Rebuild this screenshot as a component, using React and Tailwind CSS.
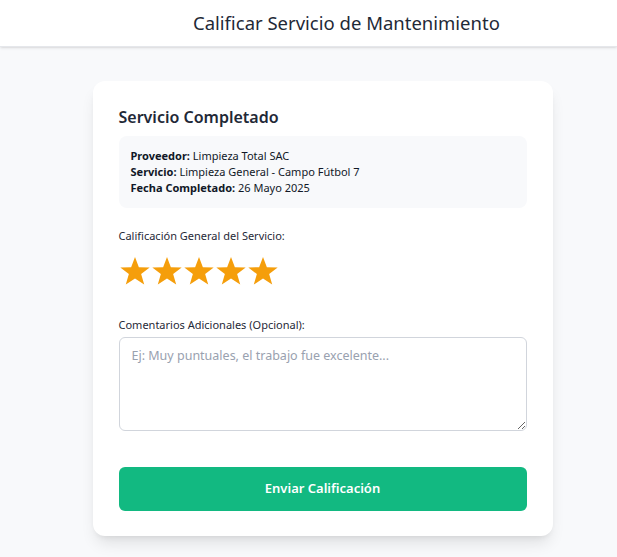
import React, { useState } from "react";

const Star = ({ filled }) => (
  <svg viewBox="0 0 24 24" className="h-[32px] w-[32px]">
    <polygon
      points="12,1.5 14.9,9.1 23,9.3 16.6,14.3 18.9,22.2 12,17.6 5.1,22.2 7.4,14.3 1,9.3 9.1,9.1"
      fill={filled ? "#f59e0b" : "#d1d5db"}
    />
  </svg>
);

const App = () => {
  const [rating, setRating] = useState(5);
  const [comment, setComment] = useState("");

  return (
    <div
      className="min-h-screen w-full bg-[#f8f9fb] text-[#1f2937]"
      style={{ fontFamily: '"Noto Sans", "Open Sans", sans-serif' }}
    >
      <header className="h-[47px] bg-white border-b border-gray-200 shadow-sm flex items-center pl-[193px]">
        <h1 className="text-[18.5px] text-[#1f2937]">Calificar Servicio de Mantenimiento</h1>
      </header>

      <main className="flex justify-center pt-[34px] pb-6 pl-[28px]">
        <div className="w-[460px] bg-white rounded-xl shadow-lg px-[26px] pt-[22px] pb-[25px]">
          <h2 className="text-base leading-7 font-semibold text-[#1f2937] mb-[5px]">
            Servicio Completado
          </h2>

          <div className="bg-[#f8f9fb] rounded-lg px-3 py-3 text-[11px] leading-4 text-[#111827]">
            <p>
              <span className="font-bold">Proveedor:</span> Limpieza Total SAC
            </p>
            <p>
              <span className="font-bold">Servicio:</span> Limpieza General - Campo Fútbol 7
            </p>
            <p>
              <span className="font-bold">Fecha Completado:</span> 26 Mayo 2025
            </p>
          </div>

          <label className="block mt-5 text-[11px] leading-4 text-[#1f2937]">
            Calificación General del Servicio:
          </label>
          <div className="flex mt-[11px] h-[32px]">
            {[1, 2, 3, 4, 5].map((n) => (
              <button key={n} type="button" onClick={() => setRating(n)}>
                <Star filled={n <= rating} />
              </button>
            ))}
          </div>

          <label className="block mt-[30px] text-[11px] leading-4 text-[#1f2937]">
            Comentarios Adicionales (Opcional):
          </label>
          <textarea
            value={comment}
            onChange={(e) => setComment(e.target.value)}
            placeholder="Ej: Muy puntuales, el trabajo fue excelente..."
            className="block mt-1 w-full h-[94px] rounded-md border border-gray-300 px-3 py-2 text-[12.5px] leading-5 placeholder:text-gray-400 focus:outline-none"
          />

          <button
            type="button"
            className="mt-9 w-full h-[44px] rounded-md bg-[#12b981] text-white text-[13px] font-semibold"
          >
            Enviar Calificación
          </button>
        </div>
      </main>
    </div>
  );
};

export default App;
